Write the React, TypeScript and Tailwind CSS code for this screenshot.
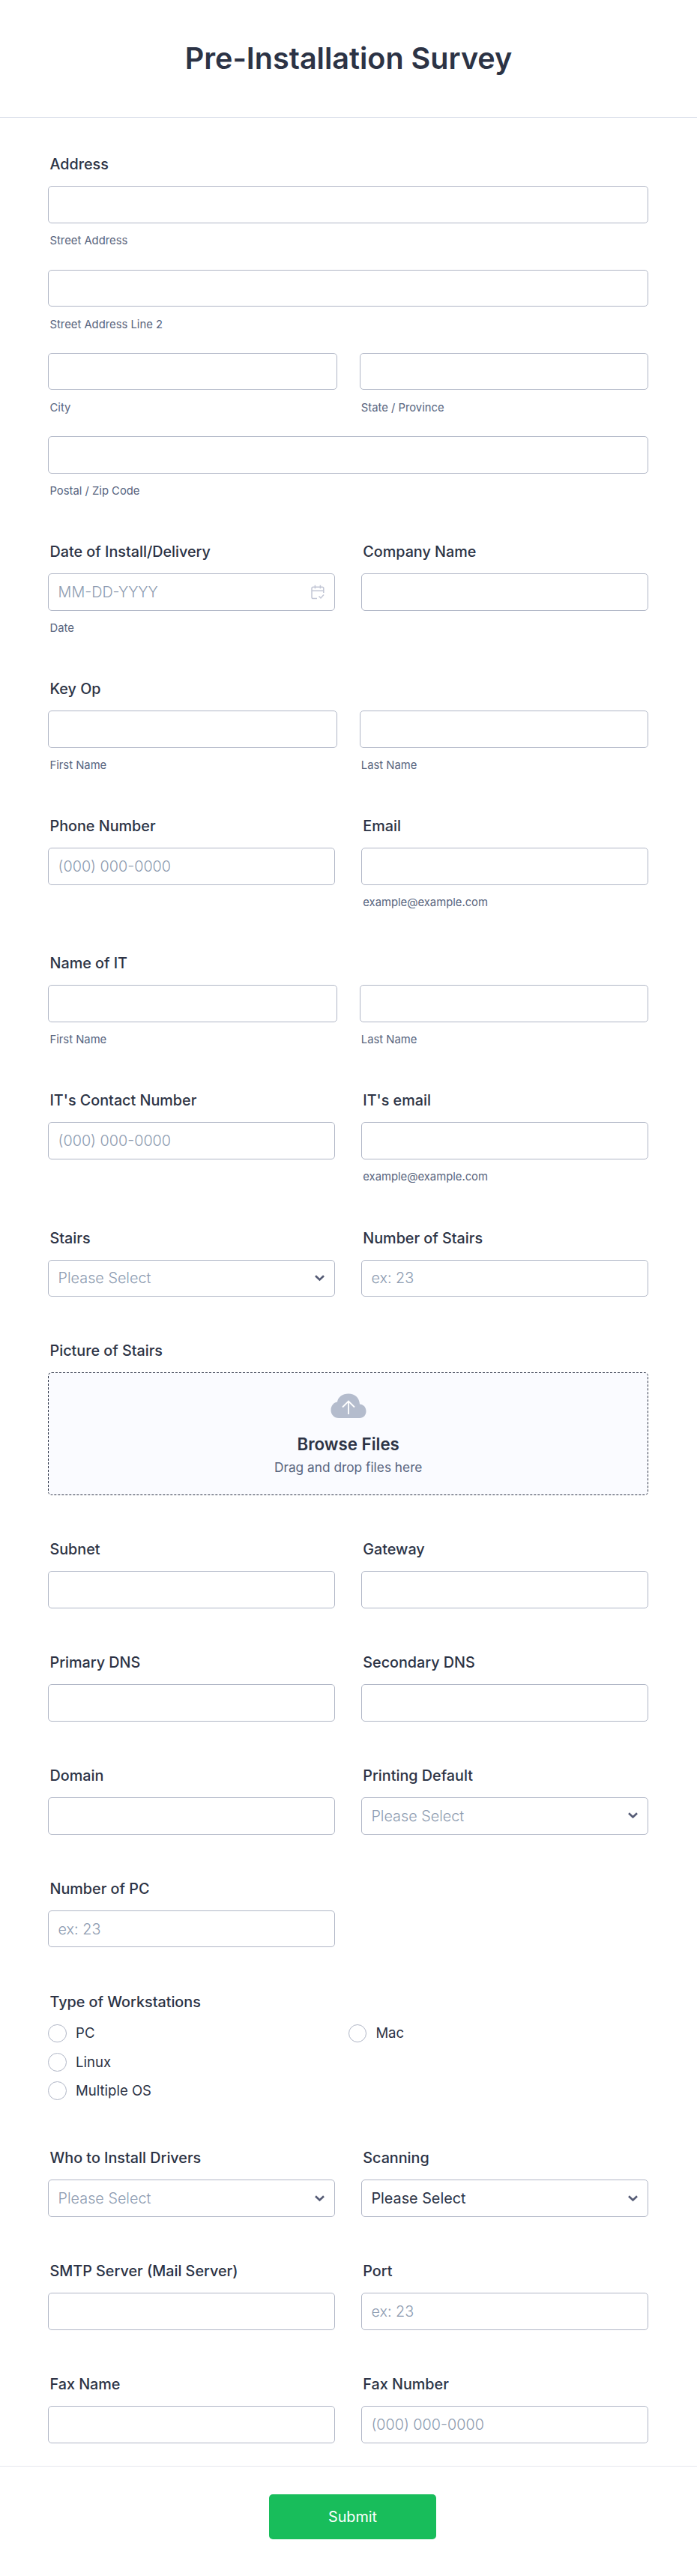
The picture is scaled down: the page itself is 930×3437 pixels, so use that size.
import { ReactNode } from 'react';

export default function App() {
  return (
    <div className="h-[3437px] w-[930px] overflow-hidden bg-white font-[Inter,sans-serif] text-[#2c3345]">
      {/* Title */}
      <header className="flex h-[157px] items-center justify-center border-b border-[#d5dae6]">
        <h1 className="text-[39.57px] font-semibold leading-[48px]">Pre-Installation Survey</h1>
      </header>

      <main className="h-[3133px] pl-[64.4px] pr-[65px] pt-[48.3px]">
        <section className="h-[517px]">
          <Label>Address</Label>
          <div className="grid grid-cols-2 gap-x-[30px]">
            <Field sub="Street Address" className="col-span-2 h-[111.3px]" />
            <Field sub="Street Address Line 2" className="col-span-2 h-[111.3px]" />
            <Field sub="City" className="h-[111.3px]" />
            <Field sub="State / Province" className="h-[111.3px]" />
            <Field sub="Postal / Zip Code" className="col-span-2 h-[111.3px]" />
          </div>
        </section>

        <Row tall>
          <Question label="Date of Install/Delivery" placeholder="MM-DD-YYYY" sub="Date" icon={<CalendarIcon />} />
          <Question label="Company Name" />
        </Row>
        <FullName label="Key Op" />
        <Row tall>
          <Question label="Phone Number" placeholder="(000) 000-0000" />
          <Question label="Email" sub="example@example.com" />
        </Row>
        <FullName label="Name of IT" />
        <Row tall>
          <Question label="IT's Contact Number" placeholder="(000) 000-0000" />
          <Question label="IT's email" sub="example@example.com" />
        </Row>
        <Row>
          <Question label="Stairs" placeholder="Please Select" icon={<Chevron />} />
          <Question label="Number of Stairs" placeholder="ex: 23" />
        </Row>

        {/* File upload */}
        <section className="h-[264.8px]">
          <Label>Picture of Stairs</Label>
          <div className="flex h-[163.5px] flex-col items-center rounded-[5px] border border-dashed border-[#2c3345] bg-[#fafbff] pt-[27px]">
            <CloudIcon />
            <p className="mt-[20px] text-[22.3px] font-semibold leading-[28px]">Browse Files</p>
            <p className="mt-[6px] text-[17.3px] leading-[22px] text-[#57647e]">Drag and drop files here</p>
          </div>
        </section>

        <Row>
          <Question label="Subnet" />
          <Question label="Gateway" />
        </Row>
        <Row>
          <Question label="Primary DNS" />
          <Question label="Secondary DNS" />
        </Row>
        <Row>
          <Question label="Domain" />
          <Question label="Printing Default" placeholder="Please Select" icon={<Chevron />} />
        </Row>
        <Row>
          <Question label="Number of PC" placeholder="ex: 23" />
        </Row>

        <section className="h-[208.6px]">
          <Label>Type of Workstations</Label>
          <div className="grid grid-cols-2 gap-y-[13.6px] pt-px">
            <Radio>PC</Radio>
            <Radio>Mac</Radio>
            <Radio>Linux</Radio>
            <span />
            <Radio>Multiple OS</Radio>
          </div>
        </section>

        <Row>
          <Question label="Who to Install Drivers" placeholder="Please Select" icon={<Chevron />} />
          <Question label="Scanning" value="Please Select" icon={<Chevron />} />
        </Row>
        <Row>
          <Question label="SMTP Server (Mail Server)" />
          <Question label="Port" placeholder="ex: 23" />
        </Row>
        <Row>
          <Question label="Fax Name" />
          <Question label="Fax Number" placeholder="(000) 000-0000" />
        </Row>
      </main>

      <footer className="flex h-[147px] justify-center border-t border-[#e6e8ef] pl-[11px] pt-[37px]">
        <button className="h-[60px] w-[223px] rounded-[5px] bg-[#18bd5b] pt-px text-[19.8px] text-white">Submit</button>
      </footer>
    </div>
  );
}

// === COMPONENTS ===

function Label({ children }: { children: ReactNode }) {
  return <label className="block h-[43px] pl-[2.1px] text-[19.75px] font-medium leading-[28px]">{children}</label>;
}

type FieldProps = {
  placeholder?: string;
  value?: string;
  sub?: string;
  icon?: ReactNode;
  className?: string;
};

function Field({ placeholder, value, sub, icon, className = '' }: FieldProps) {
  return (
    <div className={className}>
      <div className="flex h-[49.5px] items-center justify-between rounded-[5px] border border-[#b0b6c6] pl-[12.2px] pr-[13px]">
        <span className={value ? 'pt-[2px] text-[19.8px]' : 'pt-[2px] text-[19.8px] font-light text-[#8d9bb0]'}>
          {value || placeholder}
        </span>
        {icon}
      </div>
      {sub && <p className="mt-[13.5px] pl-[2.1px] text-[14.8px] leading-[20px] text-[#57647e]">{sub}</p>}
    </div>
  );
}

function Question({ label, ...field }: FieldProps & { label: string }) {
  return (
    <div>
      <Label>{label}</Label>
      <Field {...field} />
    </div>
  );
}

function Row({ tall, children }: { tall?: boolean; children: ReactNode }) {
  return (
    <section className={`grid grid-cols-2 gap-x-[35px] ${tall ? 'h-[183.05px]' : 'h-[150.9px]'}`}>{children}</section>
  );
}

function FullName({ label }: { label: string }) {
  return (
    <section className="h-[183.05px]">
      <Label>{label}</Label>
      <div className="grid grid-cols-2 gap-x-[30px]">
        <Field sub="First Name" />
        <Field sub="Last Name" />
      </div>
    </section>
  );
}

function Radio({ children }: { children: ReactNode }) {
  return (
    <label className="flex h-[24.7px] items-center gap-[12px] text-[18.55px]">
      <span className="size-[24.7px] rounded-full border border-[#b0b6c6]" />
      {children}
    </label>
  );
}

function Chevron() {
  return (
    <svg className="h-[9px] w-[13px]" viewBox="0 0 13 9" fill="none" stroke="#555b75" strokeWidth="2.6">
      <path d="M1 1.2L6.5 6.5L12 1.2" />
    </svg>
  );
}

function CalendarIcon() {
  return (
    <svg className="h-5 w-[18px]" viewBox="0 0 18 20" fill="none" stroke="#c2c6d5" strokeWidth="1.5">
      <path d="M8 18.5H2.8Q1 18.5 1 16.7V5Q1 3.2 2.8 3.2H15Q16.8 3.2 16.8 5V11M1 8.3H16.8M5.4 .8V5.2M12.4 .8V5.2" />
      <path d="M10.5 15.5L13 18L17 13.5" />
    </svg>
  );
}

function CloudIcon() {
  return (
    <svg className="h-[34px] w-[48px]" viewBox="0 0 48 34">
      <path
        d="M11 33C4.5 33 .5 28 .5 22.5C.5 16.5 4 12.5 9 11.5C10 5 16 .5 24 .5C32.5 .5 38.5 6 39 14.5C44.5 15 47.5 19 47.5 24C47.5 29 44 33 39 33Z"
        fill="#b4bccd"
      />
      <path d="M24 28V10.5M16 18.5L24 10.5L32 18.5" fill="none" stroke="#fff" strokeWidth="1.8" />
    </svg>
  );
}
